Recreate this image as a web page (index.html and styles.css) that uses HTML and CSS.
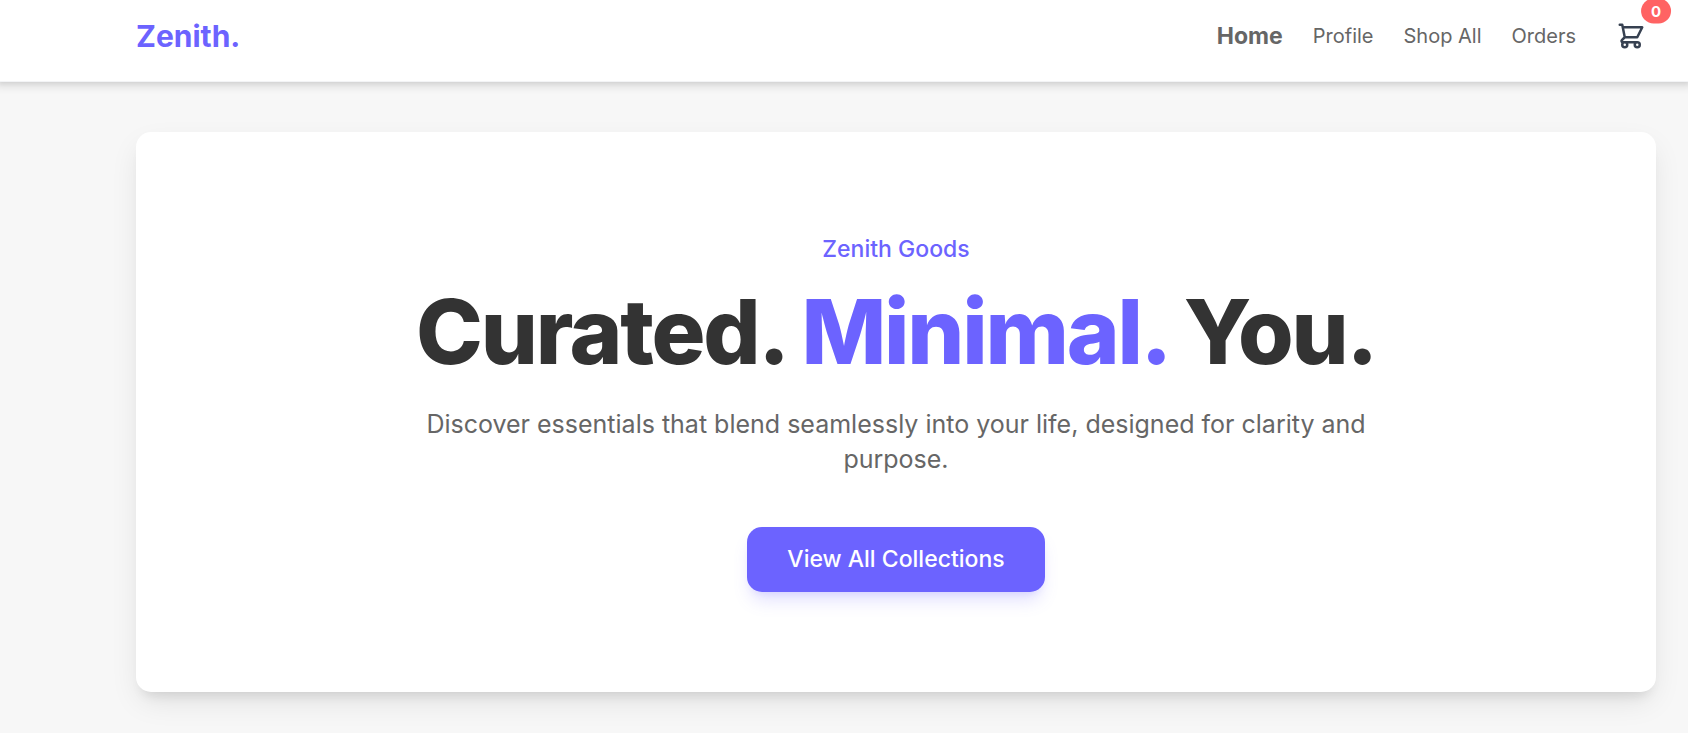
FILE: index.html
```html
<!DOCTYPE html>
<html lang="en">
<head>
    <meta charset="UTF-8">
    <meta name="viewport" content="width=device-width, initial-scale=1.0">
    <title>Zenith Goods</title>
    <link rel="stylesheet" href="styles.css">
</head>
<body>
    <header class="site-header">
        <a href="#" class="logo">Zenith.</a>
        <nav class="nav">
            <a href="#" class="nav-link active">Home</a>
            <a href="#" class="nav-link">Profile</a>
            <a href="#" class="nav-link">Shop All</a>
            <a href="#" class="nav-link">Orders</a>
            <button type="button" class="cart-button" aria-label="Cart">
                <svg class="cart-icon" viewBox="0 0 24 24" fill="none" stroke="currentColor" stroke-width="2" stroke-linecap="round" stroke-linejoin="round">
                    <path d="M3 3h2l.4 2M7 13h10l4-8H5.4M7 13L5.4 5M7 13l-2.293 2.293c-.63.63-.184 1.707.707 1.707H17m0 0a2 2 0 100 4 2 2 0 000-4zm-8 2a2 2 0 11-4 0 2 2 0 014 0z"/>
                </svg>
                <span class="cart-count">0</span>
            </button>
        </nav>
    </header>

    <main class="page">
        <section class="hero">
            <p class="hero-tag">Zenith Goods</p>
            <h1 class="hero-title">Curated. <span class="accent">Minimal.</span> You.</h1>
            <p class="hero-text">Discover essentials that blend seamlessly into your life, designed for clarity and purpose.</p>
            <button type="button" class="hero-button">View All Collections</button>
        </section>
    </main>
</body>
</html>
```
FILE: styles.css
```css
* {
    box-sizing: border-box;
}

body {
    margin: 0;
    font-family: Inter, sans-serif;
    background: #f7f7f7;
    color: #333333;
}

.site-header {
    display: flex;
    justify-content: space-between;
    align-items: center;
    padding: 11px 32px 20px 136px;
    background: #ffffff;
    border-bottom: 1px solid #f3f4f6;
    box-shadow: 0 1px 8px 4px rgba(0, 0, 0, 0.1), 0 1px 4px 1px rgba(0, 0, 0, 0.06);
}

.logo {
    font-size: 30px;
    font-weight: 700;
    color: #6c63ff;
    text-decoration: none;
}

.nav {
    display: flex;
    align-items: center;
    gap: 30px;
}

.nav-link {
    font-size: 20px;
    font-weight: 400;
    color: #666666;
    text-decoration: none;
}

.nav-link.active {
    font-size: 23px;
    font-weight: 700;
}

.cart-button {
    position: relative;
    padding: 10px;
    background: none;
    border: none;
    color: #374151;
    cursor: pointer;
}

.cart-icon {
    display: block;
    width: 30px;
    height: 30px;
}

.cart-count {
    position: absolute;
    top: 0;
    right: 0;
    padding: 0 10px;
    font-family: Inter, sans-serif;
    font-size: 15px;
    font-weight: 700;
    line-height: 25px;
    color: #ffffff;
    background: #ff6363;
    border-radius: 999px;
    transform: translate(50%, -50%);
}

.page {
    padding: 50px 32px 50px 136px;
}

.hero {
    display: flex;
    flex-direction: column;
    align-items: center;
    padding: 100px 40px;
    text-align: center;
    background: #ffffff;
    border-radius: 15px;
    box-shadow: 0 12px 30px -4px rgba(0, 0, 0, 0.1), 0 10px 12px -7px rgba(0, 0, 0, 0.1);
}

.hero-tag {
    margin: 0 0 20px;
    font-size: 23px;
    font-weight: 500;
    line-height: 35px;
    color: #6c63ff;
}

.hero-title {
    margin: 0 0 30px;
    font-size: 90px;
    font-weight: 800;
    line-height: 90px;
    letter-spacing: -0.025em;
}

.accent {
    color: #6c63ff;
}

.hero-text {
    max-width: 960px;
    margin: 0 0 50px;
    font-size: 25px;
    line-height: 35px;
    color: #666666;
}

.hero-button {
    padding: 15px 40px;
    font-family: Inter, sans-serif;
    font-size: 23px;
    font-weight: 500;
    line-height: 35px;
    color: #ffffff;
    background: #6c63ff;
    border: none;
    border-radius: 15px;
    box-shadow: 0 12px 18px -4px rgba(108, 99, 255, 0.2), 0 5px 8px -5px rgba(108, 99, 255, 0.2);
    cursor: pointer;
}
```
